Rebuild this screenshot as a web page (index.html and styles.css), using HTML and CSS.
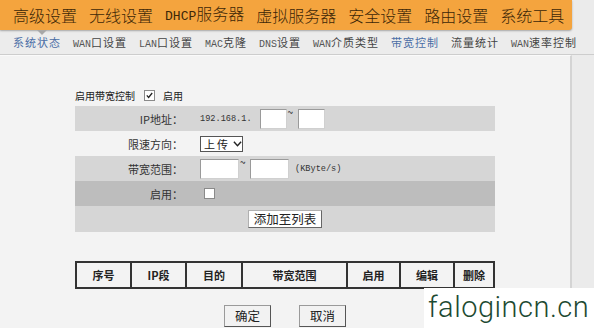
FILE: index.html
```html
<!DOCTYPE html>
<html lang="zh-CN">

<head>
    <meta charset="UTF-8">
    <title>带宽控制</title>
    <link rel="stylesheet" href="styles.css">
</head>

<body>
    <div class="topnav">
        <span class="top-item">高级设置</span>
        <span class="top-item">无线设置</span>
        <span class="top-item"><span class="lat">DHCP</span>服务器</span>
        <span class="top-item">虚拟服务器</span>
        <span class="top-item">安全设置</span>
        <span class="top-item">路由设置</span>
        <span class="top-item">系统工具</span>
    </div>

    <div class="subnav">
        <span class="sub-item active">系统状态</span>
        <span class="sub-item"><span class="lat">WAN</span>口设置</span>
        <span class="sub-item"><span class="lat">LAN</span>口设置</span>
        <span class="sub-item"><span class="lat">MAC</span>克隆</span>
        <span class="sub-item"><span class="lat">DNS</span>设置</span>
        <span class="sub-item"><span class="lat">WAN</span>介质类型</span>
        <span class="sub-item current">带宽控制</span>
        <span class="sub-item">流量统计</span>
        <span class="sub-item"><span class="lat">WAN</span>速率控制</span>
    </div>

    <div class="panel">
        <div class="content">
            <div class="enable-line">
                <span>启用带宽控制</span>
                <span class="check checked">
                    <svg width="11" height="11" viewBox="0 0 11 11"><path d="M2.2 5.4 L4.4 7.8 L8.8 2.4" fill="none" stroke="#222" stroke-width="1.6"/></svg>
                </span>
                <span>启用</span>
            </div>

            <div class="form-rows">
                <div class="row shade">
                    <div class="label">IP地址：</div>
                    <div class="value">
                        <span class="mono">192.168.1.</span>
                        <span class="field ip"></span>
                        <span class="tilde">~</span>
                        <span class="field ip"></span>
                    </div>
                </div>
                <div class="row">
                    <div class="label">限速方向：</div>
                    <div class="value">
                        <span class="select">上传
                            <svg width="10" height="8" viewBox="0 0 10 8"><path d="M1 1.5 L5 5.8 L9 1.5" fill="none" stroke="#222" stroke-width="1.6"/></svg>
                        </span>
                    </div>
                </div>
                <div class="row shade">
                    <div class="label">带宽范围：</div>
                    <div class="value">
                        <span class="field bw"></span>
                        <span class="tilde">~</span>
                        <span class="field bw"></span>
                        <span class="mono unit">(KByte/s)</span>
                    </div>
                </div>
                <div class="row dark">
                    <div class="label">启用：</div>
                    <div class="value">
                        <span class="check small"></span>
                    </div>
                </div>
                <div class="row shade center">
                    <span class="btn-add">添加至列表</span>
                </div>
            </div>

            <table class="list">
                <tr>
                    <th class="c1">序号</th>
                    <th class="c2">IP段</th>
                    <th class="c3">目的</th>
                    <th class="c4">带宽范围</th>
                    <th class="c5">启用</th>
                    <th class="c6">编辑</th>
                    <th class="c7">删除</th>
                </tr>
            </table>

            <div class="actions">
                <span class="btn">确定</span>
                <span class="btn">取消</span>
            </div>
        </div>
    </div>

    <div class="watermark">falogincn.cn</div>
</body>

</html>
```

FILE: styles.css
```css
body {
    margin: 0;
    width: 594px;
    height: 328px;
    overflow: hidden;
    position: relative;
    background-color: #ebebeb;
    font-family: "Noto Sans CJK SC", "DejaVu Sans", sans-serif;
    color: #222;
}

.lat,
.mono {
    font-family: "Liberation Mono", "Noto Sans CJK SC", monospace;
}

/* top menu */
.topnav {
    width: 572px;
    height: 30px;
    box-sizing: border-box;
    padding-left: 13px;
    display: flex;
    align-items: center;
    gap: 12px;
    background-color: #f4a43e;
    border-bottom-right-radius: 3px;
    box-shadow: 0 1px 2px rgba(0, 0, 0, 0.3);
    position: relative;
    z-index: 1;
}

.top-item {
    font-size: 16px;
    font-weight: 300;
    line-height: 30px;
    color: #3d2707;
    white-space: nowrap;
}

.top-item .lat {
    font-size: 13px;
}

/* sub menu */
.subnav {
    height: 25px;
    box-sizing: border-box;
    padding-left: 13px;
    display: flex;
    align-items: center;
    gap: 12px;
    white-space: nowrap;
    overflow: hidden;
    background-color: #ececec;
    border-bottom: 1px solid #cdcdcd;
}

.sub-item {
    font-size: 11px;
    letter-spacing: 1px;
    color: #444;
    position: relative;
}

.sub-item .lat {
    font-size: 10px;
    letter-spacing: 0;
    color: #555;
}

.sub-item.active,
.sub-item.current {
    color: #4b6ea6;
}

.sub-item.active::before {
    content: '';
    position: absolute;
    left: 24px;
    top: -4px;
    z-index: 2;
    border-left: 5px solid transparent;
    border-right: 5px solid transparent;
    border-top: 5px solid #a8a8a8;
}

/* main panel */
.panel {
    width: 572px;
    height: 274px;
    box-sizing: border-box;
    background-color: #f3f3f3;
    border-top: 1px solid #fafafa;
    border-right: 2px solid #d4d4d4;
}

.content {
    padding: 32px 0 0 75px;
    width: 420px;
}

.enable-line {
    display: flex;
    align-items: center;
    height: 14px;
    font-size: 10px;
}

.enable-line .check {
    margin: 0 8px 0 9px;
}

.check {
    display: inline-flex;
    width: 11px;
    height: 11px;
    box-sizing: border-box;
    border: 1px solid #8a8a8a;
    background-color: #fff;
}

.check.checked {
    align-items: center;
    justify-content: center;
}

.check.small {
    margin-left: 4px;
}

.form-rows {
    margin-top: 4px;
}

.row {
    height: 25px;
    display: flex;
    align-items: center;
    font-size: 11px;
}

.row.shade {
    background-color: #d6d6d6;
}

.row.dark {
    background-color: #bdbdbd;
}

.row.center {
    justify-content: center;
    height: 26px;
}

.label {
    width: 108px;
    text-align: right;
    color: #333;
}

.value {
    margin-left: 17px;
    display: flex;
    align-items: center;
}

.value .mono {
    font-size: 8.6px;
    color: #333;
}

.field {
    display: inline-block;
    height: 20px;
    box-sizing: border-box;
    background-color: #fff;
    border: 1px solid #9a9a9a;
    border-right-color: #d0d0d0;
    border-bottom-color: #d0d0d0;
}

.field.ip {
    width: 27px;
}

.value .mono + .field.ip {
    margin-left: 8px;
}

.field.bw {
    width: 39px;
}

.tilde {
    width: 10px;
    padding-left: 1px;
    font-size: 10px;
    line-height: 8px;
    align-self: flex-start;
    margin-top: -1px;
}

.unit {
    margin-left: 6px;
}

.select {
    display: inline-flex;
    align-items: center;
    gap: 3px;
    height: 16px;
    width: 43px;
    box-sizing: border-box;
    padding-left: 3px;
    border: 1px solid #555;
    background-color: #fff;
    font-size: 11px;
    letter-spacing: 2px;
    white-space: nowrap;
}

.btn-add {
    display: inline-block;
    width: 74px;
    height: 18px;
    box-sizing: border-box;
    text-align: center;
    font-size: 12.5px;
    line-height: 16px;
    background-color: #fff;
    border: 1px solid #b0b0b0;
    border-right-color: #666;
    border-bottom-color: #666;
}

/* list table */
.list {
    margin-top: 29px;
    width: 420px;
    border-collapse: collapse;
}

.list th {
    height: 24px;
    padding: 0;
    font-size: 11px;
    font-weight: bold;
    color: #222;
    border: 2px solid #333;
}

.list .c1 { width: 53px; }
.list .c2 { width: 53px; }
.list .c3 { width: 54px; }
.list .c4 { width: 103px; }
.list .c5 { width: 51px; }
.list .c6 { width: 52px; }

.actions {
    margin-top: 16px;
    display: flex;
    justify-content: center;
    gap: 28px;
}

.btn {
    width: 47px;
    height: 22px;
    box-sizing: border-box;
    text-align: center;
    font-size: 12.5px;
    line-height: 20px;
    background-color: #f2f2f2;
    border: 1px solid #9a9a9a;
    border-right-color: #555;
    border-bottom-color: #555;
}

.watermark {
    position: absolute;
    left: 424px;
    top: 288px;
    width: 170px;
    height: 40px;
    background-color: #fff;
    font-family: "Roboto", sans-serif;
    font-weight: 300;
    font-size: 29px;
    line-height: 38px;
    padding-left: 4px;
    box-sizing: border-box;
    color: #1d4a32;
    letter-spacing: 0.5px;
}
```
